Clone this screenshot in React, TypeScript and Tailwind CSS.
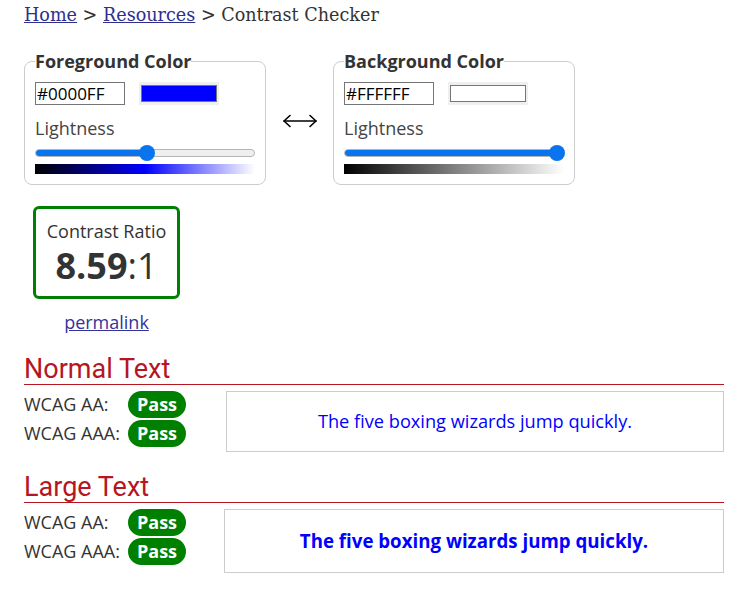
import React from "react";

function ColorField({
  legend,
  value,
  swatch,
  thumbPct,
  gradient,
}: {
  legend: string;
  value: string;
  swatch: string;
  thumbPct: "half" | "full";
  gradient: "blue" | "gray";
}) {
  return (
    <fieldset className="w-[242px] rounded-[8px] border border-[#cccccc] px-[10px] pt-[10px] pb-[10px]">
      <legend className="px-0 text-[18px] font-bold leading-[22px] text-[#333333]">{legend}</legend>
      <div className="flex items-center gap-[14px]">
        <div className="flex h-[23px] w-[90px] items-center border border-[#767676] pl-[1px] text-[17px] text-black">
          {value}
        </div>
        <div className="flex h-[23px] w-[80px] items-center justify-center bg-[#efefef]">
          <div className={`h-[17px] w-[76px] border border-[#767676] ${swatch}`} />
        </div>
      </div>
      <div className="mt-[11px] text-[18px] leading-[24px] text-[#444444]">Lightness</div>
      <div className="relative mt-[9px] h-[8px] rounded-full border border-[#b5b5b5] bg-[#efefef]">
        <div className={`h-full rounded-full bg-[#0a73ee] ${thumbPct === "half" ? "w-1/2" : "w-full"}`} />
        <div
          className={`absolute top-1/2 h-[16px] w-[16px] -translate-y-1/2 rounded-full bg-[#0a73ee] ${
            thumbPct === "half" ? "left-[calc(50%-6px)]" : "left-[calc(100%-14px)]"
          }`}
        />
      </div>
      <div
        className={`mt-[7px] h-[10px] ${
          gradient === "blue"
            ? "bg-[linear-gradient(to_right,#000000,#0000ff_50%,#ffffff)]"
            : "bg-[linear-gradient(to_right,#000000,#ffffff)]"
        }`}
      />
    </fieldset>
  );
}

function Pass() {
  return (
    <span className="flex h-[27px] w-[58px] items-center justify-center rounded-full bg-[#008000] text-[18px] font-bold text-white">
      Pass
    </span>
  );
}

function Section({ title, bold }: { title: string; bold?: boolean }) {
  return (
    <div>
      <h2 className="border-b border-[#b5161f] font-['Roboto',sans-serif] text-[27px] leading-[30px] text-[#b5161f]">
        {title}
      </h2>
      <div className="mt-[6px] flex items-start">
        <div className="flex w-[162px] flex-col gap-[2px]">
          <div className="flex items-center">
            <span className="w-[104px] text-[18px] text-[#333333]">WCAG AA:</span>
            <Pass />
          </div>
          <div className="flex items-center">
            <span className="w-[104px] text-[18px] text-[#333333]">WCAG AAA:</span>
            <Pass />
          </div>
        </div>
        <div
          className={`flex flex-1 items-center justify-center border border-[#cccccc] text-[#0000ff] ${
            bold ? "ml-[38px] h-[64px] text-[18.7px] font-bold" : "ml-[40px] h-[61px] text-[18.2px]"
          }`}
        >
          The five boxing wizards jump quickly.
        </div>
      </div>
    </div>
  );
}

export default function App() {
  return (
    <div className="min-h-[590px] bg-white pl-[24px] pr-[20px] pt-[3px] font-['Open_Sans',sans-serif] text-[#333333]">
      <div className="font-['DejaVu_Serif',serif] text-[17.6px] leading-[24px] text-[#333333]">
        <a className="text-[#2e2e8c] underline">Home</a> &gt;{" "}
        <a className="text-[#2e2e8c] underline">Resources</a> &gt; Contrast Checker
      </div>
      <div className="mt-[23px] flex items-center">
        <ColorField legend="Foreground Color" value="#0000FF" swatch="bg-[#0000ff]" thumbPct="half" gradient="blue" />
        <div className="flex w-[67px] justify-center pt-[6px]">
          <svg width="36" height="14" viewBox="0 0 36 14" fill="none" stroke="black" strokeWidth="1.6" strokeLinecap="round" strokeLinejoin="round">
            <path d="M2 7 H34" />
            <path d="M8 1.5 L2 7 L8 12.5" />
            <path d="M28 1.5 L34 7 L28 12.5" />
          </svg>
        </div>
        <ColorField legend="Background Color" value="#FFFFFF" swatch="bg-white" thumbPct="full" gradient="gray" />
      </div>
      <div className="ml-[9px] mt-[21px] flex w-[147px] flex-col items-center">
        <div className="flex h-[93px] w-[147px] flex-col items-center rounded-[6px] border-[3px] border-[#008000] pt-[10px]">
          <div className="text-[18px] leading-[24px] text-[#333333]">Contrast Ratio</div>
          <div className="text-[36px] leading-[46px] text-[#333333]">
            <span className="font-bold">8.59</span>:1
          </div>
        </div>
        <a className="mt-[11px] text-[18px] leading-[24px] text-[#33339a] underline">permalink</a>
      </div>
      <div className="mt-[20px]">
        <Section title="Normal Text" />
      </div>
      <div className="mt-[20px]">
        <Section title="Large Text" bold />
      </div>
    </div>
  );
}
